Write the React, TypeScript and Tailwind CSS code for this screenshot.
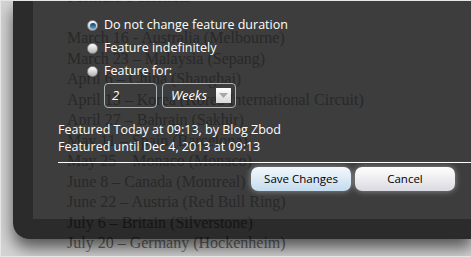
import React from 'react'

const calendar = [
  'Formula 1 calendar',
  '',
  'March 16 - Australia (Melbourne)',
  'March 23 – Malaysia (Sepang)',
  'April 6 – China (Shanghai)',
  'April 13 – Korea (Korea International Circuit)',
  'April 27 – Bahrain (Sakhir)',
  'May 11 – Spain (Barcelona)',
  'May 25 – Monaco (Monaco)',
  'June 8 – Canada (Montreal)',
  'June 22 – Austria (Red Bull Ring)',
  'July 6 – Britain (Silverstone)',
  'July 20 – Germany (Hockenheim)',
]

function Radio({ checked }: { checked?: boolean }) {
  return (
    <span className="flex items-center justify-center w-[11px] h-[11px] rounded-full border border-[#8a8a8a] bg-gradient-to-b from-white to-[#b4b4b4] shrink-0">
      {checked && (
        <span className="w-[6px] h-[6px] rounded-full bg-gradient-to-b from-[#0d3f66] to-[#5ea6d6]" />
      )}
    </span>
  )
}

export default function App() {
  const options = [
    { label: 'Do not change feature duration', checked: true },
    { label: 'Feature indefinitely' },
    { label: 'Feature for:' },
  ]

  return (
    <div className="relative w-[471px] h-[257px] overflow-hidden bg-[#d4d4d4] border-t border-l border-b border-[#e6e6e6]">
      {/* page behind the dialog */}
      <div className="pl-[66px] -mt-[14px] font-['Liberation_Serif',serif] text-[16px] leading-[20.5px] text-[#6a6a6a]">
        {calendar.map((line, i) => (
          <div key={i} className="h-[20.5px] whitespace-nowrap">
            {line}
          </div>
        ))}
      </div>

      {/* dialog */}
      <div className="absolute left-[12px] top-0 w-[459px] h-[238px] bg-black/80 rounded-bl-[16px] shadow-[0_9px_16px_rgba(0,0,0,0.6)]">
        <div className="ml-[20px] h-[218px] bg-white/[0.085] font-['Open_Sans',sans-serif] text-white">
          <div className="pl-[54px] pt-[17px] flex flex-col gap-[8px]">
            {options.map((o) => (
              <label key={o.label} className="flex items-center gap-[6px] h-[15px] text-[12.5px] whitespace-nowrap">
                <Radio checked={o.checked} />
                {o.label}
              </label>
            ))}
          </div>

          <div className="flex gap-[5px] ml-[71px] mt-[4px]">
            <div className="w-[53px] h-[25px] rounded-[4px] border border-[#a9b4b8] flex items-center pl-[7px] text-[13px] italic">
              2
            </div>
            <div className="w-[74px] h-[25px] rounded-[4px] border border-[#a9b4b8] flex items-center justify-between pl-[8px] pr-[4px] text-[13px] italic">
              Weeks
              <span className="w-[15px] h-[15px] bg-gradient-to-b from-white to-[#d8d8d8] flex items-center justify-center">
                <svg width="9" height="5" viewBox="0 0 9 5">
                  <path d="M0 0h9L4.5 5z" fill="#a8a8a8" />
                </svg>
              </span>
            </div>
          </div>

          <div className="ml-[25px] mt-[13px] text-[12.5px] leading-[17px] whitespace-nowrap">
            <div>Featured Today at 09:13, by Blog Zbod</div>
            <div>Featured until Dec 4, 2013 at 09:13</div>
          </div>

          <div className="ml-[25px] mt-[7px] h-px bg-white" />

          <div className="flex justify-end gap-[4px] pr-[17px] mt-[4px]">
            <button className="w-[100px] h-[24px] rounded-[7px] bg-gradient-to-b from-[#f4f8fc] to-[#c4dbee] text-black text-[11.5px] shadow-[0_0_6px_rgba(255,255,255,0.45)]">
              Save Changes
            </button>
            <button className="w-[100px] h-[24px] rounded-[7px] bg-gradient-to-b from-white to-[#dadae2] text-black text-[11.5px] shadow-[0_0_6px_rgba(255,255,255,0.45)]">
              Cancel
            </button>
          </div>
        </div>
      </div>
    </div>
  )
}
